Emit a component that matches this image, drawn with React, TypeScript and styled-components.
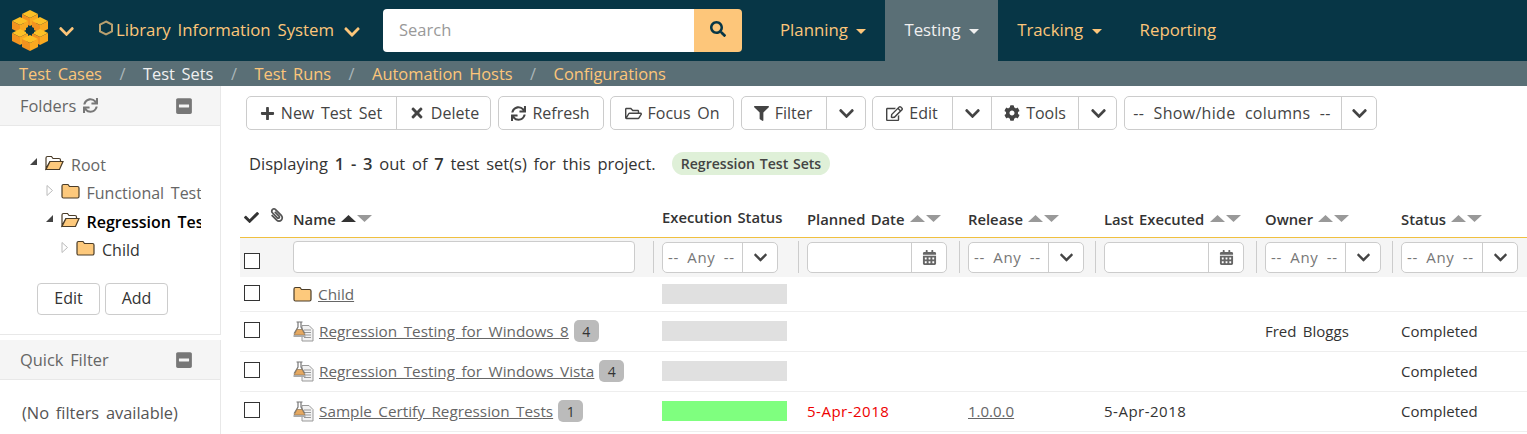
import { ReactNode } from "react";
import styled, { createGlobalStyle } from "styled-components";
import {
  FaCalendarAlt,
  FaCheck,
  FaChevronDown,
  FaCog,
  FaFilter,
  FaMinusSquare,
  FaPaperclip,
  FaPlus,
  FaRegEdit,
  FaRegFolderOpen,
  FaSearch,
  FaSync,
  FaTimes,
} from "react-icons/fa";

const GlobalStyle = createGlobalStyle`
  html, body {
    margin: 0;
    padding: 0;
    height: 434px;
    overflow: hidden;
    background: #fff;
    font-family: "Open Sans", "Noto Sans", sans-serif;
    font-size: 16px;
    word-spacing: 2.5px;
    color: #333;
  }
  * { box-sizing: border-box; }
`;

/* ---- drawings ---- */

const cubes: [number, number][] = [
  [30, 15],
  [20, 22],
  [40, 22],
  [20, 34],
  [40, 34],
  [30, 40],
];

const Logo = () => (
  <svg width="60" height="58" viewBox="0 0 60 58">
    {cubes.map(([x, y]) => (
      <g key={`${x}-${y}`}>
        <polygon points={`${x},${y - 7} ${x + 8},${y - 3} ${x},${y + 1} ${x - 8},${y - 3}`} fill="#fcc026" />
        <polygon points={`${x - 8},${y - 3} ${x},${y + 1} ${x},${y + 9} ${x - 8},${y + 5}`} fill="#f3931f" />
        <polygon points={`${x + 8},${y - 3} ${x},${y + 1} ${x},${y + 9} ${x + 8},${y + 5}`} fill="#f9a920" />
      </g>
    ))}
    <polygon points="30,24 34,26 34,31 30,33 26,31 26,26" fill="#073646" />
  </svg>
);

const ProjectHex = () => (
  <svg width="14" height="16" viewBox="0 0 14 16">
    <polygon points="7,1.5 13,4.5 13,11.5 7,14.5 1,11.5 1,4.5" fill="none" stroke="#b9a06f" strokeWidth="2" />
  </svg>
);

const Folder = () => (
  <svg width="19" height="16" viewBox="0 0 19 16">
    <path
      d="M1 3 Q1 1.5 2.5 1.5 H7 L8.5 3.5 H16.5 Q18 3.5 18 5 V13.5 Q18 15 16.5 15 H2.5 Q1 15 1 13.5 Z"
      fill="#fdc97c"
      stroke="#4a3c28"
      strokeWidth="1.2"
    />
  </svg>
);

const FolderOpen = () => (
  <svg width="19" height="16" viewBox="0 0 19 16">
    <path
      d="M1 13.5 V3 Q1 1.5 2.5 1.5 H6.5 L8 3.5 H14 Q15.5 3.5 15.5 5 V6.5 H5 L1 13.5 Z"
      fill="#fff"
      stroke="#4a3c28"
      strokeWidth="1.2"
    />
    <path d="M1 14.5 L5 6.5 H18 L14.5 14.5 Z" fill="#fdc97c" stroke="#4a3c28" strokeWidth="1.2" />
  </svg>
);

const TestSetIcon = () => (
  <svg width="21" height="21" viewBox="0 0 21 21">
    <path d="M9 4.5h7l4 4V20H9Z" fill="#f2f2f2" stroke="#999" />
    <path d="M11 9h7M11 11.5h7M11 14h7M11 16.5h7" stroke="#999" />
    <path d="M3.5 1h6M5 1v5L1.5 12h10L8 6V1" fill="#fff" stroke="#777" strokeWidth="1.2" />
    <path d="M1 14 L4 8.5 H9 L12 14 Z" fill="#e5a860" stroke="#8c7453" strokeWidth="0.7" />
    <rect x="0.5" y="14" width="12" height="2" fill="#aaa" />
  </svg>
);

const Twisty = ({ open }: { open?: boolean }) => (
  <svg width="8" height="13" viewBox="0 0 8 13">
    {open ? (
      <polygon points="7,3 7,10 0,10" fill="#444" />
    ) : (
      <polygon points="1,1.5 6.5,6.5 1,11.5" fill="#fff" stroke="#bbb" />
    )}
  </svg>
);

const SortArrows = ({ active }: { active?: boolean }) => (
  <SortBox>
    <svg width="32" height="9" viewBox="0 0 32 9">
      <polygon points="0,8 7.5,1 15,8" fill={active ? "#333" : "#999"} />
      <polygon points="16,1 31,1 23.5,8" fill="#999" />
    </svg>
  </SortBox>
);

/* ---- data ---- */

const subLinks = ["Test Cases", "Test Sets", "Test Runs", "Automation Hosts", "Configurations"];

const rows = [
  { id: 1, name: "Regression Testing for Windows 8", count: 4, owner: "Fred Bloggs" },
  { id: 2, name: "Regression Testing for Windows Vista", count: 4, owner: "" },
  {
    id: 3,
    name: "Sample Certify Regression Tests",
    count: 1,
    owner: "",
    passed: true,
    planned: "5-Apr-2018",
    release: "1.0.0.0",
    executed: "5-Apr-2018",
  },
];

/* ---- app ---- */

const DropList = ({ width = 116 }: { width?: number }) => (
  <Combo $w={width}>
    <ComboText>-- Any --</ComboText>
    <ComboAddon>
      <FaChevronDown size={15} />
    </ComboAddon>
  </Combo>
);

const DatePick = () => (
  <Combo $w={140}>
    <ComboText />
    <ComboAddon>
      <FaCalendarAlt size={15} color="#666" />
    </ComboAddon>
  </Combo>
);

const Btn = ({ w, icon, children }: { w: number; icon?: ReactNode; children?: ReactNode }) => (
  <Button $w={w}>
    {icon}
    {children}
  </Button>
);

const Chevron = ({ w = 39 }: { w?: number }) => (
  <Button $w={w}>
    <FaChevronDown size={17} />
  </Button>
);

export default function App() {
  return (
    <>
      <GlobalStyle />
      <NavBar>
        <LogoSlot>
          <Logo />
          <FaChevronDown size={17} color="#fdc67a" />
        </LogoSlot>
        <ProjectSlot>
          <ProjectHex />
          <ProjectName>Library Information System</ProjectName>
          <FaChevronDown size={18} color="#fdc67a" />
        </ProjectSlot>
        <SearchBox>
          <SearchInput>Search</SearchInput>
          <SearchButton>
            <FaSearch size={16} color="#073646" />
          </SearchButton>
        </SearchBox>
        <NavItem>
          Planning <Caret />
        </NavItem>
        <NavItem $active>
          Testing <Caret />
        </NavItem>
        <NavItem>
          Tracking <Caret />
        </NavItem>
        <NavItem>Reporting</NavItem>
      </NavBar>
      <SubNav>
        {subLinks.map((l, i) => (
          <SubItem key={l}>
            {i > 0 && <SubSep>/</SubSep>}
            <SubLink $current={l === "Test Sets"}>{l}</SubLink>
          </SubItem>
        ))}
      </SubNav>
      <Body>
        <Sidebar>
          <Panel>
            <PanelHead>
              <span>
                Folders <FaSync size={15} color="#777" style={{ verticalAlign: -1 }} />
              </span>
              <FaMinusSquare size={18} color="#777" />
            </PanelHead>
            <Tree>
              <TreeRow $depth={0}>
                <Twisty open />
                <FolderOpen />
                <TreeLabel>Root</TreeLabel>
              </TreeRow>
              <TreeRow $depth={1}>
                <Twisty />
                <Folder />
                <TreeLabel>Functional Test Sets</TreeLabel>
              </TreeRow>
              <TreeRow $depth={1}>
                <Twisty open />
                <FolderOpen />
                <TreeLabel $selected>Regression Test Sets</TreeLabel>
              </TreeRow>
              <TreeRow $depth={2}>
                <Twisty />
                <Folder />
                <TreeLabel $dark>Child</TreeLabel>
              </TreeRow>
            </Tree>
            <TreeButtons>
              <SmallButton>Edit</SmallButton>
              <SmallButton>Add</SmallButton>
            </TreeButtons>
          </Panel>
          <Panel>
            <PanelHead>
              <span>Quick Filter</span>
              <FaMinusSquare size={18} color="#777" />
            </PanelHead>
            <NoFilters>(No filters available)</NoFilters>
          </Panel>
        </Sidebar>
        <Main>
          <Toolbar>
            <Group>
              <Btn w={150} icon={<FaPlus size={15} />}>New Test Set</Btn>
              <Btn w={95} icon={<FaTimes size={16} />}>Delete</Btn>
            </Group>
            <Group>
              <Btn w={106} icon={<FaSync size={15} />}>Refresh</Btn>
            </Group>
            <Group>
              <Btn w={124} icon={<FaRegFolderOpen size={17} />}>Focus On</Btn>
            </Group>
            <Group>
              <Btn w={85} icon={<FaFilter size={15} />}>Filter</Btn>
              <Chevron w={40} />
            </Group>
            <Group>
              <Btn w={80} icon={<FaRegEdit size={17} />}>Edit</Btn>
              <Chevron />
              <Btn w={87} icon={<FaCog size={16} />}>Tools</Btn>
              <Chevron />
            </Group>
            <Group>
              <Btn w={217}>
                <ColumnsText>-- Show/hide columns --</ColumnsText>
              </Btn>
              <Chevron w={36} />
            </Group>
          </Toolbar>
          <Summary>
            <span>
              Displaying <b>1 - 3</b> out of <b>7</b> test set(s) for this project.
            </span>
            <Pill>Regression Test Sets</Pill>
          </Summary>
          <Grid>
            <colgroup>
              <col width={26} />
              <col width={22} />
              <col width={365} />
              <col width={145} />
              <col width={161} />
              <col width={136} />
              <col width={161} />
              <col width={136} />
              <col width={135} />
            </colgroup>
            <thead>
              <HeadRow>
                <HeadCell $pad={4}>
                  <FaCheck size={15} />
                </HeadCell>
                <HeadCell $pad={4}>
                  <Clip size={14} color="#555" />
                </HeadCell>
                <HeadCell $pad={5}>
                  Name <SortArrows active />
                </HeadCell>
                <HeadCell $lift>Execution Status</HeadCell>
                <HeadCell>
                  Planned Date <SortArrows />
                </HeadCell>
                <HeadCell>
                  Release <SortArrows />
                </HeadCell>
                <HeadCell>
                  Last Executed <SortArrows />
                </HeadCell>
                <HeadCell>
                  Owner <SortArrows />
                </HeadCell>
                <HeadCell>
                  Status <SortArrows />
                </HeadCell>
              </HeadRow>
              <FilterRow>
                <FilterCell $pad={4}>
                  <CheckBox $low />
                </FilterCell>
                <FilterCell />
                <FilterCell $pad={5}>
                  <NameFilter />
                </FilterCell>
                <FilterCell>
                  <Divider>
                    <DropList />
                  </Divider>
                </FilterCell>
                <FilterCell>
                  <Divider>
                    <DatePick />
                  </Divider>
                </FilterCell>
                <FilterCell>
                  <Divider>
                    <DropList />
                  </Divider>
                </FilterCell>
                <FilterCell>
                  <Divider>
                    <DatePick />
                  </Divider>
                </FilterCell>
                <FilterCell>
                  <Divider>
                    <DropList />
                  </Divider>
                </FilterCell>
                <FilterCell>
                  <Divider>
                    <DropList width={117} />
                  </Divider>
                </FilterCell>
              </FilterRow>
            </thead>
            <tbody>
              <DataRow $h={34}>
                <DataCell $pad={4}>
                  <CheckBox />
                </DataCell>
                <DataCell />
                <DataCell $pad={5}>
                  <ChildBox>
                    <Folder />
                    <NameLink>Child</NameLink>
                  </ChildBox>
                </DataCell>
                <DataCell>
                  <ExecBar />
                </DataCell>
                <DataCell colSpan={5} />
              </DataRow>
              {rows.map((r) => (
                <DataRow key={r.id} $h={40}>
                  <DataCell $pad={4}>
                    <CheckBox />
                  </DataCell>
                  <DataCell />
                  <DataCell $pad={5}>
                    <NameBox>
                      <TestSetIcon />
                      <NameLink>{r.name}</NameLink>
                      <Count>{r.count}</Count>
                    </NameBox>
                  </DataCell>
                  <DataCell>
                    <ExecBar $passed={r.passed} />
                  </DataCell>
                  <DataCell>
                    <Overdue>{r.planned}</Overdue>
                  </DataCell>
                  <DataCell>
                    <ReleaseLink>{r.release}</ReleaseLink>
                  </DataCell>
                  <DataCell>
                    <DateText>{r.executed}</DateText>
                  </DataCell>
                  <DataCell>{r.owner}</DataCell>
                  <DataCell>Completed</DataCell>
                </DataRow>
              ))}
            </tbody>
          </Grid>
        </Main>
      </Body>
    </>
  );
}

/* ---- styles ---- */

const NavBar = styled.header`
  display: flex;
  align-items: stretch;
  height: 61px;
  background: #073646;
  color: #fdc67a;
`;

const LogoSlot = styled.div`
  display: flex;
  align-items: center;
  width: 99px;
  svg:last-child {
    margin-left: -2px;
    margin-top: 2px;
  }
`;

const ProjectSlot = styled.div`
  display: flex;
  align-items: center;
  width: 284px;
  font-size: 16.8px;
  svg:last-child {
    margin-left: 9px;
    margin-top: 2px;
  }
  svg:first-child {
    margin-top: -5px;
    margin-right: 3px;
  }
`;

const ProjectName = styled.span`
  padding-bottom: 2px;
  white-space: nowrap;
`;

const SearchBox = styled.div`
  display: flex;
  align-self: center;
  width: 359px;
  height: 43px;
  margin-right: 19px;
`;

const SearchInput = styled.div`
  flex: 1;
  background: #fff;
  border-radius: 4px 0 0 4px;
  color: #999;
  font-size: 16.5px;
  line-height: 41px;
  padding-left: 16px;
`;

const SearchButton = styled.div`
  display: flex;
  align-items: center;
  justify-content: center;
  width: 48px;
  padding-bottom: 4px;
  background: #fdc67a;
  border-radius: 0 4px 4px 0;
`;

const NavItem = styled.div<{ $active?: boolean }>`
  display: flex;
  align-items: center;
  gap: 8.5px;
  padding: 0 19px 2px;
  font-size: 16.8px;
  word-spacing: 0;
  white-space: nowrap;
  background: ${(p) => (p.$active ? "#5a6f76" : "transparent")};
  color: ${(p) => (p.$active ? "#f0f0f0" : "#fdc67a")};
`;

const Caret = styled.i`
  width: 0;
  height: 0;
  margin-top: 4px;
  border-left: 5px solid transparent;
  border-right: 5px solid transparent;
  border-top: 5px solid currentColor;
`;

const SubNav = styled.nav`
  display: flex;
  height: 25px;
  padding-left: 19px;
  background: #5a6f76;
  font-size: 16.4px;
  line-height: 26px;
`;

const SubItem = styled.div`
  display: flex;
  white-space: nowrap;
`;

const SubSep = styled.span`
  width: 41px;
  text-align: center;
  color: #aab6ba;
`;

const SubLink = styled.span<{ $current?: boolean }>`
  color: ${(p) => (p.$current ? "#f0f0f0" : "#fdc67a")};
`;

const Body = styled.div`
  display: flex;
  height: 348px;
  overflow: hidden;
`;

const Sidebar = styled.aside`
  flex: 0 0 221px;
  display: flex;
  flex-direction: column;
  gap: 5px;
`;

const Panel = styled.section`
  border-right: 1px solid #e8e8e8;
  border-bottom: 1px solid #e8e8e8;
  &:last-child {
    flex: 1;
    border-bottom: 0;
  }
`;

const PanelHead = styled.div`
  display: flex;
  align-items: center;
  justify-content: space-between;
  height: 40px;
  padding: 0 27px 0 20px;
  background: #f5f5f5;
  border-bottom: 1px solid #e8e8e8;
  color: #666;
  font-size: 16.4px;
`;

const Tree = styled.div`
  width: 201px;
  padding: 24.5px 0 0 30px;
  overflow: hidden;
`;

const TreeRow = styled.div<{ $depth: number }>`
  display: flex;
  align-items: center;
  height: 28.5px;
  margin-left: ${(p) => p.$depth * 15.5}px;
  white-space: nowrap;
  svg {
    flex: none;
  }
  svg:first-child {
    margin-top: -6px;
    margin-right: 7px;
  }
  svg:nth-child(2) {
    margin-top: -4px;
  }
`;

const TreeLabel = styled.span<{ $selected?: boolean; $dark?: boolean }>`
  margin-left: 7px;
  font-weight: ${(p) => (p.$selected ? 600 : 400)};
  color: ${(p) => (p.$selected ? "#000" : p.$dark ? "#333" : "#666")};
`;

const TreeButtons = styled.div`
  display: flex;
  gap: 5px;
  padding: 18.5px 0 19px 37px;
`;

const SmallButton = styled.div`
  width: 63px;
  height: 32px;
  border: 1px solid #ccc;
  border-radius: 4px;
  text-align: center;
  line-height: 29px;
`;

const NoFilters = styled.div`
  padding: 21px 0 0 22px;
  font-size: 16.4px;
  color: #555;
`;

const Main = styled.main`
  flex: 1;
  min-width: 0;
  padding: 10px 0 0 19px;
  overflow: hidden;
`;

const Toolbar = styled.div`
  display: flex;
  gap: 6.5px;
  padding-left: 6px;
`;

const Group = styled.div`
  display: flex;
  height: 34px;
  border: 1px solid #ccc;
  border-radius: 5px;
`;

const Button = styled.div<{ $w: number }>`
  display: flex;
  align-items: center;
  justify-content: center;
  gap: 6px;
  width: ${(p) => p.$w}px;
  color: #444;
  white-space: nowrap;
  & + & {
    border-left: 1px solid #ccc;
  }
  &:first-child {
    margin-left: -1px;
  }
  &:last-child {
    margin-right: -1px;
  }
`;

const ColumnsText = styled.span`
  letter-spacing: 0.3px;
  word-spacing: 5px;
`;

const Summary = styled.div`
  display: flex;
  align-items: center;
  gap: 16px;
  height: 24px;
  margin: 21px 0 29px 9px;
  font-size: 16.5px;
  color: #333;
  b {
    font-weight: 600;
  }
`;

const Pill = styled.span`
  padding: 0 9px;
  height: 23px;
  border-radius: 12px;
  background: #dff0d8;
  font-size: 14.1px;
  font-weight: 600;
  line-height: 23px;
  word-spacing: 1px;
  color: #444;
`;

const Grid = styled.table`
  width: 1287px;
  table-layout: fixed;
  border-collapse: collapse;
`;

const HeadRow = styled.tr`
  height: 33px;
  border-bottom: 1px solid #f0c040;
`;

const HeadCell = styled.th<{ $pad?: number; $lift?: boolean }>`
  padding: 0 0 ${(p) => (p.$lift ? 7 : 2)}px ${(p) => p.$pad ?? 9}px;
  text-align: left;
  font-size: 14.8px;
  font-weight: 600;
  word-spacing: 1.5px;
  color: #333;
  white-space: nowrap;
  overflow: hidden;
`;

const Clip = styled(FaPaperclip)`
  transform: scaleX(-1);
  margin-bottom: 4px;
`;

const SortBox = styled.span`
  svg {
    vertical-align: 2px;
  }
`;

const FilterRow = styled.tr`
  height: 40px;
  background: #f5f5f5;
`;

const FilterCell = styled.td<{ $pad?: number }>`
  padding: 0 0 0 ${(p) => p.$pad ?? 0}px;
  vertical-align: middle;
`;

const Divider = styled.div`
  display: flex;
  align-items: center;
  height: 32px;
  padding-left: 8px;
  border-left: 1px solid #ccc;
`;

const NameFilter = styled.div`
  width: 342px;
  height: 32px;
  background: #fff;
  border: 1px solid #ccc;
  border-radius: 4px;
`;

const CheckBox = styled.div<{ $low?: boolean }>`
  width: 16px;
  height: 16px;
  background: #fff;
  border: 1px solid #333;
  margin-top: ${(p) => (p.$low ? 8 : -2)}px;
`;

const Combo = styled.div<{ $w: number }>`
  display: flex;
  width: ${(p) => p.$w}px;
  height: 31px;
  background: #fff;
  border: 1px solid #ccc;
  border-radius: 5px;
  flex: none;
`;

const ComboText = styled.div`
  flex: 1;
  padding-left: 5px;
  font-size: 15px;
  letter-spacing: 0.6px;
  word-spacing: 4px;
  line-height: 29px;
  color: #777;
  white-space: nowrap;
  overflow: hidden;
`;

const ComboAddon = styled.div`
  display: flex;
  align-items: center;
  justify-content: center;
  width: 35px;
  border-left: 1px solid #ccc;
  color: #444;
`;

const DataRow = styled.tr<{ $h: number }>`
  height: ${(p) => p.$h}px;
  border-bottom: 1px solid #eee;
`;

const DataCell = styled.td<{ $pad?: number }>`
  padding: 0 0 0 ${(p) => p.$pad ?? 9}px;
  font-size: 15px;
  color: #333;
  vertical-align: middle;
  white-space: nowrap;
  overflow: hidden;
`;

const NameBox = styled.div`
  display: flex;
  align-items: center;
  gap: 5px;
  font-size: 15.3px;
`;

const ChildBox = styled(NameBox)`
  gap: 6px;
  padding-top: 1px;
`;

const NameLink = styled.span`
  color: #666;
  text-decoration: underline;
`;

const Count = styled.span`
  padding: 0 8.5px;
  height: 22px;
  border-radius: 5px;
  background: #bbb;
  color: #333;
  font-size: 14px;
  line-height: 23px;
  text-align: center;
`;

const ExecBar = styled.div<{ $passed?: boolean }>`
  width: 125px;
  height: 20px;
  background: ${(p) => (p.$passed ? "#7fff7f" : "#e0e0e0")};
`;

const DateText = styled.span`
  letter-spacing: 0.5px;
`;

const Overdue = styled(DateText)`
  color: #e00;
  font-weight: 500;
`;

const ReleaseLink = styled.span`
  color: #666;
  text-decoration: underline;
`;
